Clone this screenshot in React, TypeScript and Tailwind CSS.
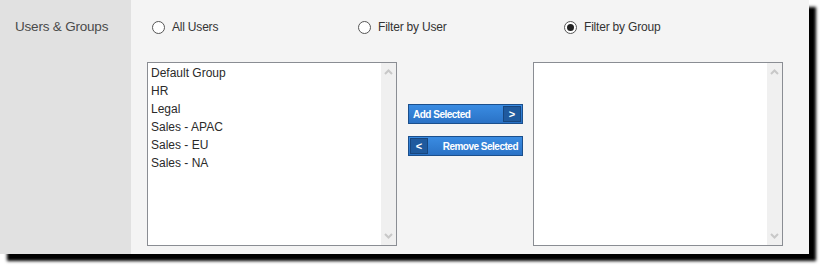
import React from "react";

const Radio = ({ checked, label }: { checked?: boolean; label: string }) => (
  <div className="flex w-[206px] items-center gap-[7px]">
    <div className="flex h-[13px] w-[13px] items-center justify-center rounded-full border border-[#555] bg-white">
      {checked && <div className="h-[7px] w-[7px] rounded-full bg-[#222]" />}
    </div>
    <span className="text-[12px] leading-[14px] tracking-[-0.2px] text-[#333]">{label}</span>
  </div>
);

const Chevron = ({ down }: { down?: boolean }) => (
  <svg width="9" height="6" viewBox="0 0 9 6" className="block">
    <polyline
      points={down ? "1,1 4.5,4.5 8,1" : "1,5 4.5,1.5 8,5"}
      fill="none"
      stroke="#c8c8c8"
      strokeWidth="2"
    />
  </svg>
);

const ListBox = ({ items }: { items: string[] }) => (
  <div className="flex h-[184px] w-[250px] border border-[#8a8d93] bg-white">
    <div className="flex-1 pl-[3px] pt-[1px] text-[12px] leading-[18px] text-[#2a2a2a]">
      {items.map((i) => (
        <div key={i}>{i}</div>
      ))}
    </div>
    <div className="flex w-[15px] flex-col items-center justify-between bg-[#f0f0f0] pb-[6px] pt-[6px]">
      <Chevron />
      <Chevron down />
    </div>
  </div>
);

export default function App() {
  return (
    <div className="h-[265px] w-[821px] bg-white" style={{ fontFamily: '"Liberation Sans", Arial, sans-serif' }}>
      <div className="flex h-[254px] w-[809px] shadow-[7px_7px_3px_rgba(0,0,0,1)]">
        <div className="w-[131px] bg-[#e1e1e1] pl-[15px] pt-[18px] text-[13.5px] leading-[18px] tracking-[-0.2px] text-[#4a4a4a]">
          Users &amp; Groups
        </div>
        <div className="flex-1 bg-[#f4f4f4] pl-[16px] pt-[20px]">
          <div className="flex h-[14px] items-center pl-[5px]">
            <Radio label="All Users" />
            <Radio label="Filter by User" />
            <Radio checked label="Filter by Group" />
          </div>
          <div className="mt-[28px] flex">
            <ListBox items={["Default Group", "HR", "Legal", "Sales - APAC", "Sales - EU", "Sales - NA"]} />
            <div className="ml-[11px] mr-[10px] flex w-[115px] flex-col gap-[12px] pt-[42px]">
              <button className="flex h-[20px] w-[115px] items-center justify-between border border-[#1b4f8c] bg-gradient-to-b from-[#3a8ce2] to-[#2a72c6] pl-[4px] pr-[1px] text-white">
                <span className="text-[10px] font-bold tracking-[-0.5px]">Add Selected</span>
                <span className="flex h-[16px] w-[18px] items-center justify-center border border-[#17467e] bg-[#1f5a9e] text-[11px] font-bold">&gt;</span>
              </button>
              <button className="flex h-[20px] w-[115px] items-center justify-between border border-[#1b4f8c] bg-gradient-to-b from-[#3a8ce2] to-[#2a72c6] pl-[1px] pr-[4px] text-white">
                <span className="flex h-[16px] w-[18px] items-center justify-center border border-[#17467e] bg-[#1f5a9e] text-[11px] font-bold">&lt;</span>
                <span className="text-[10px] font-bold tracking-[-0.5px]">Remove Selected</span>
              </button>
            </div>
            <ListBox items={[]} />
          </div>
        </div>
      </div>
    </div>
  );
}
